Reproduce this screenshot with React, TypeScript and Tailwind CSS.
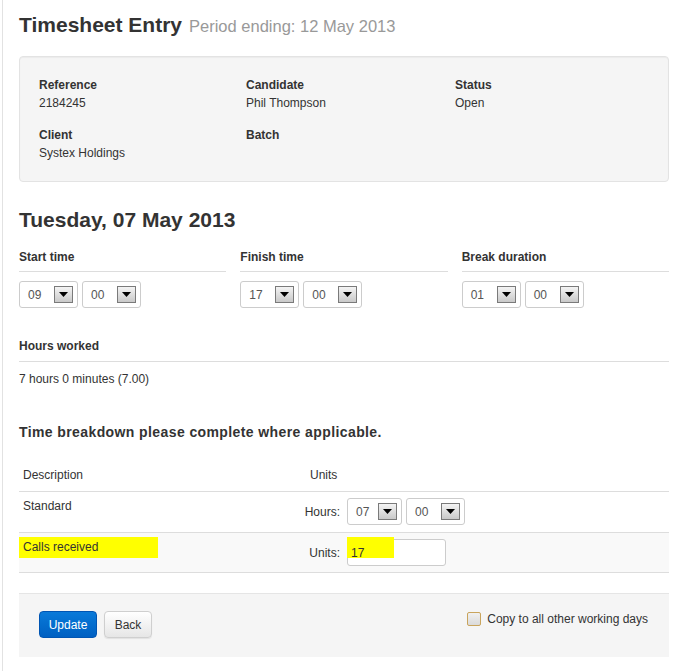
import React from 'react'

function Arrow() {
  return (
    <span className="flex h-[17px] w-[19px] items-center justify-center border border-[#7a7a7a] bg-gradient-to-b from-[#f4f4f4] to-[#c9c9c9]">
      <svg width="9" height="5" viewBox="0 0 9 5">
        <path d="M0 0h9L4.5 5z" fill="#000" />
      </svg>
    </span>
  )
}

function TimeSelect({ value, width = 'w-[59px]' }: { value: string; width?: string }) {
  return (
    <div
      className={`flex h-[27px] ${width} items-center justify-between rounded-[3px] border border-[#cccccc] bg-white pl-[8px] pr-[4px] text-[12px] text-[#555]`}
    >
      <span>{value}</span>
      <Arrow />
    </div>
  )
}

function InfoItem({ label, value }: { label: string; value?: string }) {
  return (
    <div>
      <div className="font-bold leading-[18px]">{label}</div>
      <div className="h-[18px] leading-[18px]">{value}</div>
    </div>
  )
}

function TimeGroup({ label, hour, minute }: { label: string; hour: string; minute: string }) {
  return (
    <div>
      <div className="border-b border-[#dddddd] pb-[5px] font-bold leading-[18px]">{label}</div>
      <div className="mt-[9px] flex gap-[4px]">
        <TimeSelect value={hour} />
        <TimeSelect value={minute} />
      </div>
    </div>
  )
}

export default function App() {
  return (
    <div className="min-h-[671px] bg-white font-['Liberation_Sans',Arial,sans-serif] text-[12px] text-[#333]">
      <div className="ml-[2px] min-h-[671px] border-l border-[#e2e2e2] pl-[16px] pr-[5px] pt-[13px]">
        <h1 className="flex items-baseline gap-[7px] leading-[24px]">
          <span className="text-[21px] font-bold text-[#333]">Timesheet Entry</span>
          <span className="text-[16.5px] text-[#999]">Period ending: 12 May 2013</span>
        </h1>

        <div className="mt-[18px] rounded-[4px] border border-[#e3e3e3] bg-[#f5f5f5] px-[19px] pb-[19px] pt-[19px] shadow-[inset_0_1px_1px_rgba(0,0,0,0.04)]">
          <div className="grid grid-cols-[207px_209px_1fr] gap-y-[14px]">
            <InfoItem label="Reference" value="2184245" />
            <InfoItem label="Candidate" value="Phil Thompson" />
            <InfoItem label="Status" value="Open" />
            <InfoItem label="Client" value="Systex Holdings" />
            <InfoItem label="Batch" />
          </div>
        </div>

        <h2 className="mt-[26px] text-[21px] font-bold leading-[24px]">Tuesday, 07 May 2013</h2>

        <div className="mt-[16px] grid grid-cols-3 gap-x-[14px]">
          <TimeGroup label="Start time" hour="09" minute="00" />
          <TimeGroup label="Finish time" hour="17" minute="00" />
          <TimeGroup label="Break duration" hour="01" minute="00" />
        </div>

        <div className="mt-[29px] border-b border-[#dddddd] pb-[6px] font-bold leading-[18px]">Hours worked</div>
        <div className="mt-[8px] leading-[18px]">7 hours 0 minutes (7.00)</div>

        <h3 className="mt-[34px] text-[14px] font-bold leading-[20px] tracking-[0.4px]">
          Time breakdown please complete where applicable.
        </h3>

        <div className="mt-[24px]">
          <div className="grid grid-cols-[270px_1fr] border-b border-[#dddddd] pb-[7px] leading-[18px]">
            <div className="pl-[4px]">Description</div>
            <div className="pl-[21px]">Units</div>
          </div>
          <div className="grid grid-cols-[270px_1fr] border-b border-[#dddddd] pb-[7px] pt-[5px]">
            <div className="pl-[4px] leading-[18px]">Standard</div>
            <div className="flex items-center pt-[1px]">
              <span className="w-[51px] text-right">Hours:</span>
              <div className="ml-[7px] flex gap-[4px]">
                <TimeSelect value="07" width="w-[55px]" />
                <TimeSelect value="00" />
              </div>
            </div>
          </div>
          <div className="grid grid-cols-[270px_1fr] border-b border-[#dddddd] bg-[#f9f9f9] pb-[6px] pt-[4px]">
            <div>
              <span className="inline-block h-[21px] w-[139px] bg-[#ffff00] pl-[4px] leading-[21px]">Calls received</span>
            </div>
            <div className="flex items-center pt-[2px]">
              <span className="w-[51px] text-right">Units:</span>
              <div className="relative ml-[7px] flex h-[27px] w-[99px] items-center rounded-[3px] border border-[#cccccc] bg-white">
                <span className="absolute left-[-1px] top-[-3px] h-[21px] w-[47px] bg-[#ffff00]" />
                <span className="relative pl-[3px] pt-[1px] text-[#333]">17</span>
              </div>
            </div>
          </div>
        </div>

        <div className="mt-[20px] flex items-start justify-between border-t border-[#e5e5e5] bg-[#f5f5f5] pb-[19px] pl-[20px] pr-[21px] pt-[17px]">
          <div className="flex gap-[7px]">
            <button className="h-[27px] w-[58px] rounded-[4px] border border-[#0055b3] bg-gradient-to-b from-[#0a7ad9] to-[#0060c2] text-[12px] text-white">
              Update
            </button>
            <button className="h-[27px] w-[48px] rounded-[4px] border border-[#cfcfcf] bg-gradient-to-b from-white to-[#e6e6e6] text-[12px] text-[#333] shadow-[0_1px_1px_rgba(0,0,0,0.08)]">
              Back
            </button>
          </div>
          <label className="-mt-[1px] flex items-start gap-[6px] leading-[18px]">
            <span className="mt-[2px] h-[14px] w-[14px] rounded-[2px] border border-[#c9a45c] bg-gradient-to-b from-[#f0f0f0] to-[#dadada]" />
            <span>Copy to all other working days</span>
          </label>
        </div>
      </div>
    </div>
  )
}
